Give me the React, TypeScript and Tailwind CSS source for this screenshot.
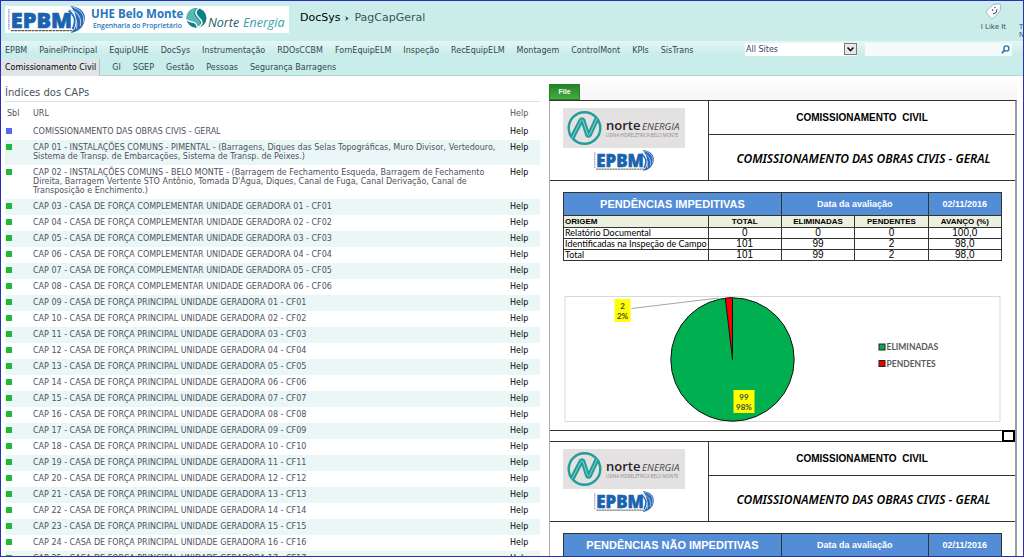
import React from "react";

const navPrimary = [
  "EPBM", "PainelPrincipal", "EquipUHE", "DocSys", "Instrumentação", "RDOsCCBM", "FornEquipELM",
  "Inspeção", "RecEquipELM", "Montagem", "ControlMont", "KPIs", "SisTrans",
];
const navSecondary = ["GI", "SGEP", "Gestão", "Pessoas", "Segurança Barragens"];

const pad = (n: number) => String(n).padStart(2, "0");

const caps: string[] = [
  "COMISSIONAMENTO DAS OBRAS CIVIS - GERAL",
  "CAP 01 - INSTALAÇÕES COMUNS - PIMENTAL - (Barragens, Diques das Selas Topográficas, Muro Divisor, Vertedouro, Sistema de Transp. de Embarcações, Sistema de Transp. de Peixes.)",
  "CAP 02 - INSTALAÇÕES COMUNS - BELO MONTE - (Barragem de Fechamento Esqueda, Barragem de Fechamento Direita, Barragem Vertente STO Antônio, Tomada D'Água, Diques, Canal de Fuga, Canal Derivação, Canal de Transposição e Enchimento.)",
  ...[1, 2, 3, 4, 5, 6].map(
    (n) => `CAP ${pad(n + 2)} - CASA DE FORÇA COMPLEMENTAR UNIDADE GERADORA ${pad(n)} - CF${pad(n)}`
  ),
  ...Array.from(
    { length: 17 },
    (_, i) => `CAP ${pad(i + 9)} - CASA DE FORÇA PRINCIPAL UNIDADE GERADORA ${pad(i + 1)} - CF${pad(i + 1)}`
  ),
];

function EpbmLogo({ className }: { className: string }) {
  return (
    <svg viewBox="0 0 82 28" className={className} role="img" aria-label="EPBM">
      <path d="M66 0 C78 1 83 9 80 17 C78 23 73 27 66 28 C71 24 73 19 72 14 C71 8 69 4 66 0Z" fill="#2a67b4" />
      <path d="M64 4 C73 5 78 12 76 21 M63 8 C70 9 74 15 72 24 M68 1 C77 4 81 10 79 17" fill="none" stroke="#a9cbed" strokeWidth="1.1" />
      <path d="M64 5 C70 9 72 16 68 24" fill="none" stroke="#2a67b4" strokeWidth="2" />
      <text x="4" y="22.500" fontFamily="Open Sans, sans-serif" fontWeight="800" fontSize="22.500" fill="#1b63ae" stroke="#1b63ae" strokeWidth=".7">EPBM</text>
      <path d="M2 3V24" stroke="#7e95b5" strokeWidth="1.400" strokeDasharray="1.5 .7" />
      <path d="M4 25.500H68" stroke="#5a5551" strokeWidth="1.300" strokeDasharray="3 .6" />
    </svg>
  );
}

function HeaderLogo() {
  return (
    <div className="flex h-[27px] w-[284px] items-center bg-white">
      <EpbmLogo className="h-[27px] w-[83px] overflow-visible" />
      <svg viewBox="0 0 200 27" className="h-[27px] w-[200px] overflow-visible" role="img" aria-label="UHE Belo Monte Norte Energia">
        <text x="3" y="11.500" fontFamily="Open Sans, sans-serif" fontWeight="700" fontSize="11.500" fill="#2577be">UHE Belo Monte</text>
        <text x="5" y="22" fontFamily="Open Sans, sans-serif" fontWeight="600" fontSize="6.800" fill="#2577be">Engenharia do Proprietário</text>
        <circle cx="108.500" cy="12" r="10" fill="#0e7f86" />
        <path d="M98.500 13 C98 5 104 2 109 2 C105 5 106 9 109 12 C114 16 113 20 108 22 C110 16 103 18 98.500 13Z" fill="#55b8b1" />
        <path d="M111 2 C105 6 109 10 112 13 C116 17 113 20 109 22" fill="none" stroke="#fff" strokeWidth="1.500" />
        <path d="M99 14 C104 18 108 14 109 21" fill="none" stroke="#fff" strokeWidth="1.200" />
        <text x="120" y="21" fontFamily="Open Sans, sans-serif" fontStyle="italic" fontSize="12.500" fill="#1d5e63">Norte</text>
        <text x="155" y="21" fontFamily="Open Sans, sans-serif" fontStyle="italic" fontSize="12.500" fill="#35a1a8">Energia</text>
      </svg>
    </div>
  );
}

function NorteLogo() {
  return (
    <svg viewBox="0 0 122 40" className="h-[40px] w-[122px] bg-[#e3e1e2]" role="img" aria-label="norte ENERGIA">
      <circle cx="21.500" cy="20" r="15.800" fill="none" stroke="#229e9a" strokeWidth="2.400" />
      <path d="M9 30 L18 12.500 Q19 11 20 12.500 L24.500 26.500 Q25.500 28 26.500 26.500 L34 10.500" fill="none" stroke="#229e9a" strokeWidth="5" />
      <path d="M9 30 L18 12.500 Q19 11 20 12.500 L24.500 26.500 Q25.500 28 26.500 26.500 L34 10.500" fill="none" stroke="#8bd0cb" strokeWidth="1" />
      <text x="43" y="22" fontFamily="Open Sans, sans-serif" fontWeight="600" fontSize="13" fill="#252324">norte</text>
      <text x="79" y="22" fontFamily="Open Sans, sans-serif" fontStyle="italic" fontSize="9.800" fill="#474344">ENERGIA</text>
      <text x="43" y="29" fontFamily="Open Sans, sans-serif" fontSize="4.400" fill="#8d898b">USINA HIDRELÉTRICA BELO MONTE</text>
    </svg>
  );
}

function SheetHeader() {
  return (
    <div className="flex h-[80px] border-b border-[#333]">
      <div className="flex w-[159px] shrink-0 flex-col items-center border-r border-[#333] pr-[10px] pt-[7px]">
        <NorteLogo />
        <EpbmLogo className="mt-[2px] h-[21px] w-[64px]" />
      </div>
      <div className="flex flex-1 flex-col text-center text-black">
        <h2 className="h-[34px] border-b border-[#333] text-[10px] leading-[34px] font-bold">COMISSIONAMENTO&nbsp; CIVIL</h2>
        <h3 className="flex-1 pl-[3px] font-['Noto_Sans',sans-serif] text-[12px] leading-[48px] font-semibold italic">
          COMISSIONAMENTO DAS OBRAS CIVIS - GERAL
        </h3>
      </div>
    </div>
  );
}

function PendingTable({ title, rows }: { title: string; rows: string[][] }) {
  return (
    <table className="mt-[11px] w-full table-fixed border-collapse text-center text-[10px] leading-[10px] text-black">
      <colgroup>
        <col className="w-[33%]" />
        <col />
        <col />
        <col />
        <col />
      </colgroup>
      <thead>
        <tr className="h-[23px] bg-[#538dd5] text-[9px] text-white">
          <th colSpan={2} className="border border-[#333] text-[11px]">{title}</th>
          <th colSpan={2} className="border border-[#333]">Data da avaliação</th>
          <th className="border border-[#333]">02/11/2016</th>
        </tr>
        <tr className="h-[12px] bg-[#ebf1de] text-[8px]">
          <th className="border border-[#333] px-px text-left">ORIGEM</th>
          <th className="border border-[#333]">TOTAL</th>
          <th className="border border-[#333]">ELIMINADAS</th>
          <th className="border border-[#333]">PENDENTES</th>
          <th className="border border-[#333]">AVANÇO (%)</th>
        </tr>
      </thead>
      <tbody>
        {rows.map((r) => (
          <tr key={r[0]} className="h-[11px]">
            {r.map((c, i) => (
              <td
                key={i}
                className={
                  i === 0
                    ? "border border-[#333] px-px text-left font-[Lato,sans-serif] text-[9px] whitespace-nowrap"
                    : "border border-[#333]"
                }
              >
                {c}
              </td>
            ))}
          </tr>
        ))}
      </tbody>
    </table>
  );
}

function PieChart() {
  return (
    <svg viewBox="0 0 436 126" className="mt-[35px] h-[126px] w-full" role="img" aria-label="Pendências" fontFamily="Lato, sans-serif">
      <rect x=".5" y=".5" width="435" height="125" fill="#fff" stroke="#d9d9d9" />
      <circle cx="168" cy="63.500" r="61.700" fill="#00b050" stroke="#111" />
      <path d="M168 63.500 L160.800 2.200 A61.700 61.700 0 0 1 168 1.800Z" fill="#f00" stroke="#111" />
      <path d="M67 12.500 L154 2" stroke="#a6a6a6" fill="none" />
      <rect x="50" y="3" width="16" height="23" fill="#ff0" />
      <rect x="169" y="94" width="21" height="23" fill="#ff0" />
      <g fontSize="8" fontWeight="700" fill="#444" textAnchor="middle">
        <text x="58" y="13">2</text>
        <text x="58" y="23">2%</text>
        <text x="179.500" y="104">99</text>
        <text x="179.500" y="114">98%</text>
      </g>
      <rect x="314.500" y="48" width="6" height="6" fill="#00b050" stroke="#222" />
      <rect x="314.500" y="64.500" width="6" height="6" fill="#e00" stroke="#222" />
      <g fontSize="8.500" fontWeight="700" fill="#5a5a5a">
        <text x="322" y="54">ELIMINADAS</text>
        <text x="322" y="70.500">PENDENTES</text>
      </g>
    </svg>
  );
}

export default function App() {
  return (
    <div className="flex h-screen flex-col overflow-hidden border border-[#2b2bc8] bg-white font-['DejaVu_Sans',Verdana,sans-serif] text-[8px] text-[#4c535c]">
      <header className="flex h-[40px] shrink-0 items-start justify-between overflow-hidden bg-[#cbedea]">
        <div className="flex items-start pt-[5px] pl-[4px]">
          <HeaderLogo />
          <h1 className="flex items-center pt-[4px] pl-[11px] text-[11px] leading-[16px] text-[#3b5358]">
            <a href="#docsys" className="text-black">DocSys</a>
            <svg viewBox="0 0 4 6" className="mx-[5px] h-[5px] w-[4px]" aria-hidden="true">
              <path d="M0 0L4 3L0 6L1 3Z" fill="#2c4448" />
            </svg>
            <span>PagCapGeral</span>
          </h1>
        </div>
        <div className="flex items-start text-[7px] leading-[8px] text-[#33505f]">
          <button type="button" className="flex flex-col items-center pt-[2px]">
            <svg viewBox="0 0 18 18" className="mb-[3px] h-[17px] w-[17px]" aria-hidden="true">
              <path d="M9 1.500 L15 1 Q16.500 1 16.500 3 L16 8.500 L9 16 Q7.500 17 6 15.500 L2 11 Q1 9.500 2 8Z" fill="#fff" stroke="#9aa9bb" strokeWidth=".9" />
              <circle cx="8" cy="7.500" r=".9" fill="#3d5a7c" />
              <circle cx="10.500" cy="4.800" r=".8" fill="#3d5a7c" />
              <path d="M8.500 11.500 Q13 11 12.500 6.500" fill="none" stroke="#3d5a7c" strokeWidth="1.200" />
            </svg>
            I Like It
          </button>
          <button type="button" className="ml-[13px] w-[4px] overflow-hidden pt-[22px] text-left">
            T<br />N
          </button>
        </div>
      </header>

      <div className="flex h-[35px] shrink-0 items-start justify-between border-b border-[#b3d6d3] bg-linear-to-b from-[#e4f7f5] to-[#c9edea] to-40% text-[#33474f]">
        <nav className="pt-px leading-[17px] whitespace-nowrap">
          <div className="flex gap-[12px] pl-[4px]">
            {navPrimary.map((n) => (
              <a key={n} href={`#${n}`}>{n}</a>
            ))}
          </div>
          <div className="flex gap-[12px]">
            <a href="#comissionamento" className="border-r border-[#b5bfc2] bg-[#dfe5e6] pr-[3px] pl-[4px] text-black">Comissionamento Civil</a>
            {navSecondary.map((n) => (
              <a key={n} href={`#${n}`}>{n}</a>
            ))}
          </div>
        </nav>
        <form className="flex gap-[8px] pt-[2px] pr-[11px]">
          <div className="relative flex h-[13px] w-[112px] bg-white">
            <select aria-label="Search scope" className="w-full appearance-none pl-px text-[8px] leading-[13px] text-[#33426b]">
              <option>All Sites</option>
            </select>
            <svg viewBox="0 0 13 12" className="pointer-events-none absolute top-0 right-0 h-[12px] w-[13px]" aria-hidden="true">
              <rect x=".5" y=".5" width="12" height="11" fill="#e9e9e9" stroke="#777" />
              <path d="M3.500 4.500 L6.500 7.500 L9.500 4.500" fill="none" stroke="#111" strokeWidth="1.600" />
            </svg>
          </div>
          <div className="flex h-[13px] w-[147px] items-center bg-[#f7fafa]">
            <input type="text" aria-label="Search" className="h-full min-w-0 flex-1 px-[2px] outline-none" />
            <button type="submit" aria-label="Search" className="pr-[2px]">
              <svg viewBox="0 0 10 10" className="h-[9px] w-[9px]" aria-hidden="true">
                <circle cx="6" cy="3.800" r="2.800" fill="#fff" stroke="#2277b5" strokeWidth="1.500" />
                <path d="M4 6 L1 9" stroke="#2277b5" strokeWidth="2" />
              </svg>
            </button>
          </div>
        </form>
      </div>

      <div className="flex min-h-0 flex-1">
        <section className="w-[539px] shrink-0 pl-[4px]">
          <h2 className="mt-[8px] border-b border-[#dde1e4] text-[10px] leading-[17px]">Índices dos CAPs</h2>
          <table className="w-full table-fixed text-left leading-[9px]">
            <colgroup>
              <col className="w-[28px]" />
              <col />
              <col className="w-[44px]" />
            </colgroup>
            <thead>
              <tr className="h-[22px]">
                <th className="pl-[2px] font-normal">Sbl</th>
                <th className="font-normal">URL</th>
                <th className="pl-[14px] font-normal">Help</th>
              </tr>
            </thead>
            <tbody>
              {caps.map((c, i) => (
                <tr key={c} className="align-top odd:bg-white even:bg-[#ebf7f7]">
                  <td className="pt-[4px] pl-px">
                    <span className={i === 0 ? "block h-[6px] w-[6px] bg-[#5468f0]" : "block h-[6px] w-[6px] bg-[#22b83c]"} />
                  </td>
                  <td className="pt-[3px] pb-[4px]">
                    <a href={`#cap-${i}`}>{c}</a>
                  </td>
                  <td className="pt-[3px] pl-[14px] text-black">
                    <a href={`#help-${i}`}>Help</a>
                  </td>
                </tr>
              ))}
            </tbody>
          </table>
        </section>

        <section className="mr-[6px] ml-[9px] flex min-w-0 flex-1 flex-col font-['Liberation_Sans',Arial,sans-serif]">
          <div className="h-[24px] shrink-0 bg-linear-to-b from-white to-[#f6f6f7] pt-[8px]">
            <button type="button" className="flex h-[16px] w-[31px] items-center justify-center border border-[#2a7d2a] bg-linear-to-b from-[#23852a] to-[#48ab3c] text-[7px] font-bold text-white">
              File
            </button>
          </div>
          <div className="min-h-0 flex-1 overflow-hidden border-t border-r-2 border-l border-t-[#333] border-r-[#9b9ba3] border-l-[#aaa]">
            <SheetHeader />
            <div className="px-[13px]">
              <PendingTable
                title="PENDÊNCIAS IMPEDITIVAS"
                rows={[
                  ["Relatório Documental", "0", "0", "0", "100,0"],
                  ["Identificadas na Inspeção de Campo", "101", "99", "2", "98,0"],
                  ["Total", "101", "99", "2", "98,0"],
                ]}
              />
              <PieChart />
            </div>
            <div className="mt-[8px] flex h-[12px] justify-end border-t border-b border-[#333]">
              <div className="-mt-px -mb-px w-[13px] border-2 border-black" />
            </div>
            <SheetHeader />
            <div className="px-[13px]">
              <PendingTable title="PENDÊNCIAS NÃO IMPEDITIVAS" rows={[]} />
            </div>
          </div>
        </section>
      </div>
    </div>
  );
}
